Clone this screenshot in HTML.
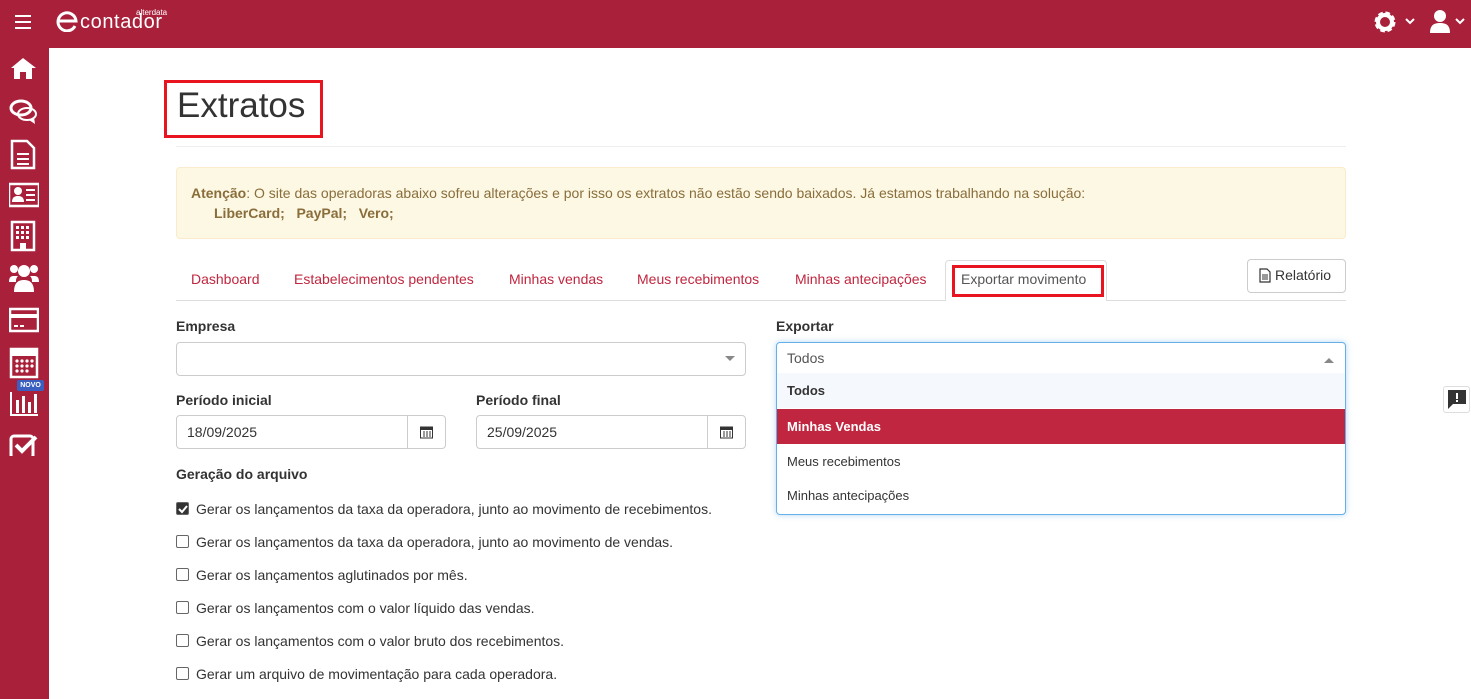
<!DOCTYPE html>
<html><head><meta charset="utf-8"><style>
*{box-sizing:border-box;margin:0;padding:0}
body{width:1471px;height:699px;overflow:hidden;background:#fff;font-family:"Liberation Sans",sans-serif;font-size:14px;color:#333;position:relative}
.abs{position:absolute}
.hdr{left:0;top:0;width:1471px;height:48px;background:#a8203a}
.side{left:0;top:48px;width:49px;height:651px;background:#a8203a}
.red{color:#c0263f}
.lbl{font-weight:bold;font-size:14px;color:#333}
.inp{border:1px solid #ccc;border-radius:4px;background:#fff}
.cb{width:13px;height:13px;border:1px solid #666;border-radius:2px;background:#fff}
.opt{left:0;width:568px;height:35px;line-height:35px;padding-left:10px;font-size:13px}
</style></head><body>
<div class="abs hdr"></div>
<div class="abs side"></div>
<!-- hamburger -->
<div class="abs" style="left:15px;top:15px;width:16px;height:2px;background:#fff"></div>
<div class="abs" style="left:15px;top:21px;width:16px;height:2px;background:#fff"></div>
<div class="abs" style="left:15px;top:27px;width:16px;height:2px;background:#fff"></div>
<!-- logo -->
<svg class="abs" style="left:56px;top:10px" width="22" height="22" viewBox="0 0 22 22"><path d="M19 16A9 9 0 1 1 20 11H3" fill="none" stroke="#fff" stroke-width="3"/></svg>
<div class="abs" style="left:80px;top:11px;color:#fff;font-size:20px;letter-spacing:0.6px">contador</div>
<div class="abs" style="left:136px;top:8px;color:#fff;font-size:8px">alterdata</div>
<!-- top right -->
<svg class="abs" style="left:1372px;top:9px" width="26" height="26" viewBox="0 0 26 26"><circle cx="13" cy="13" r="8" fill="none" stroke="#fff" stroke-width="5" stroke-dasharray="4 2.3"/><circle cx="13" cy="13" r="7" fill="none" stroke="#fff" stroke-width="4"/></svg>
<svg class="abs" style="left:1405px;top:17px" width="10" height="8"><path d="M1 2l4 4 4-4" stroke="#fff" stroke-width="2" fill="none"/></svg>
<svg class="abs" style="left:1429px;top:9px" width="22" height="25"><circle cx="11" cy="7" r="6" fill="#fff"/><path d="M1 24c0-8 4-10 10-10s10 2 10 10z" fill="#fff"/></svg>
<svg class="abs" style="left:1455px;top:17px" width="10" height="8"><path d="M1 2l4 4 4-4" stroke="#fff" stroke-width="2" fill="none"/></svg>
<!-- side icons -->
<svg class="abs" style="left:9px;top:56px" width="30" height="400" fill="#fff">
<path d="M2 12L14 2l13 10h-4v11h-6v-7h-6v7H5V12z"/>
<g transform="translate(0,42)"><ellipse cx="12" cy="10" rx="10" ry="7" fill="none" stroke="#fff" stroke-width="3"/><ellipse cx="18" cy="16" rx="9" ry="6" fill="none" stroke="#fff" stroke-width="2"/><path d="M20 22l6 4-1-7z"/></g>
<g transform="translate(0,84)"><path d="M3 1h15l7 7v20H3z" fill="none" stroke="#fff" stroke-width="2.5"/><rect x="8" y="13" width="12" height="2"/><rect x="8" y="18" width="12" height="2"/><rect x="8" y="23" width="12" height="2"/></g>
<g transform="translate(0,128)"><rect x="0" y="0" width="30" height="22" fill="none" stroke="#fff" stroke-width="2.5"/><circle cx="9" cy="7" r="4"/><path d="M3 18c0-5 3-6 6-6s6 1 6 6z"/><rect x="17" y="5" width="9" height="2"/><rect x="17" y="10" width="9" height="2"/><rect x="17" y="15" width="9" height="2"/></g>
<g transform="translate(0,166)"><rect x="3" y="0" width="22" height="28" fill="none" stroke="#fff" stroke-width="2.5"/><g fill="#fff"><rect x="7" y="4" width="3" height="3"/><rect x="12" y="4" width="3" height="3"/><rect x="17" y="4" width="3" height="3"/><rect x="7" y="9" width="3" height="3"/><rect x="12" y="9" width="3" height="3"/><rect x="17" y="9" width="3" height="3"/><rect x="7" y="14" width="3" height="3"/><rect x="12" y="14" width="3" height="3"/><rect x="17" y="14" width="3" height="3"/><rect x="11" y="21" width="6" height="7"/></g></g>
<g transform="translate(0,208)"><circle cx="5" cy="5" r="4"/><circle cx="25" cy="5" r="4"/><circle cx="15" cy="7" r="6"/><path d="M0 18c0-5 2-6 5-6h4c-2 2-2 4-2 6z"/><path d="M30 18c0-5-2-6-5-6h-4c2 2 2 4 2 6z"/><path d="M5 28c0-10 5-12 10-12s10 2 10 12z"/></g>
<g transform="translate(0,252)"><rect x="1" y="1" width="28" height="22" fill="none" stroke="#fff" stroke-width="2.5"/><rect x="1" y="6" width="28" height="4"/><rect x="5" y="17" width="4" height="2"/><rect x="11" y="17" width="4" height="2"/></g>
<g transform="translate(0,292)"><rect x="2" y="1" width="26" height="28" fill="none" stroke="#fff" stroke-width="2.5"/><rect x="2" y="1" width="26" height="7"/><g fill="#fff"><circle cx="8" cy="13" r="1.6"/><circle cx="13" cy="13" r="1.6"/><circle cx="18" cy="13" r="1.6"/><circle cx="23" cy="13" r="1.6"/><circle cx="8" cy="18" r="1.6"/><circle cx="13" cy="18" r="1.6"/><circle cx="18" cy="18" r="1.6"/><circle cx="23" cy="18" r="1.6"/><circle cx="8" cy="23" r="1.6"/><circle cx="13" cy="23" r="1.6"/><circle cx="18" cy="23" r="1.6"/></g></g>
<g transform="translate(-2,336)"><rect x="9" y="8" width="3" height="13"/><rect x="15" y="4" width="3" height="17"/><rect x="21" y="10" width="3" height="11"/><rect x="27" y="2" width="3" height="19"/><rect x="3" y="0" width="2" height="24"/><rect x="3" y="22" width="28" height="2"/></g>
<g transform="translate(0,376)"><rect x="2" y="4" width="22" height="22" rx="3" fill="none" stroke="#fff" stroke-width="3"/><path d="M7 13l6 6 14-14" stroke="#fff" stroke-width="4" fill="none"/></g>
</svg>
<div class="abs" style="left:17px;top:380px;width:27px;height:11px;background:#3b5fc0;border-radius:2px;color:#fff;font-size:7px;font-weight:bold;text-align:center;line-height:11px">NOVO</div>

<!-- title -->
<div class="abs" style="left:164px;top:80px;width:159px;height:58px;border:3px solid #e8141f"></div>
<div class="abs" style="left:177px;top:86px;font-size:35px;color:#333">Extratos</div>
<div class="abs" style="left:176px;top:146px;width:1170px;height:1px;background:#eee"></div>
<!-- alert -->
<div class="abs" style="left:176px;top:167px;width:1170px;height:72px;background:#fcf8e3;border:1px solid #faebcc;border-radius:4px;color:#8a6d3b;font-size:14px">
<div class="abs" style="left:14px;top:17px;white-space:nowrap"><b>Atenção</b>: O site das operadoras abaixo sofreu alterações e por isso os extratos não estão sendo baixados. Já estamos trabalhando na solução:</div>
<div class="abs" style="left:37px;top:37px;font-weight:bold;white-space:nowrap">LiberCard;&nbsp;&nbsp; PayPal;&nbsp;&nbsp; Vero;</div>
</div>
<!-- tabs -->
<div class="abs" style="left:176px;top:300px;width:1170px;height:1px;background:#ddd"></div>
<div class="abs red" style="left:191px;top:271px">Dashboard</div>
<div class="abs red" style="left:294px;top:271px">Estabelecimentos pendentes</div>
<div class="abs red" style="left:509px;top:271px">Minhas vendas</div>
<div class="abs red" style="left:637px;top:271px">Meus recebimentos</div>
<div class="abs red" style="left:795px;top:271px">Minhas antecipações</div>
<div class="abs" style="left:945px;top:260px;width:162px;height:41px;background:#fff;border:1px solid #ddd;border-bottom:none;border-radius:4px 4px 0 0"></div>
<div class="abs" style="left:952px;top:265px;width:152px;height:32px;border:3px solid #e8141f"></div>
<div class="abs" style="left:961px;top:271px;color:#555">Exportar movimento</div>
<div class="abs inp" style="left:1247px;top:259px;width:99px;height:34px"></div>
<svg class="abs" style="left:1259px;top:268px" width="12" height="15"><path d="M1 1h7l3 3v10H1z" fill="none" stroke="#333" stroke-width="1.2"/><path d="M3 7h6M3 9h6M3 11h6" stroke="#333"/></svg>
<div class="abs" style="left:1275px;top:267px;color:#333">Relatório</div>
<!-- form left -->
<div class="abs lbl" style="left:176px;top:318px">Empresa</div>
<div class="abs inp" style="left:176px;top:342px;width:570px;height:34px"></div>
<div class="abs" style="left:725px;top:356px;border:5px solid transparent;border-top:5px solid #888"></div>
<div class="abs lbl" style="left:176px;top:392px">Período inicial</div>
<div class="abs inp" style="left:176px;top:415px;width:270px;height:34px"></div>
<div class="abs" style="left:407px;top:416px;width:1px;height:32px;background:#ccc"></div>
<div class="abs" style="left:187px;top:424px">18/09/2025</div>
<div class="abs lbl" style="left:476px;top:392px">Período final</div>
<div class="abs inp" style="left:476px;top:415px;width:270px;height:34px"></div>
<div class="abs" style="left:707px;top:416px;width:1px;height:32px;background:#ccc"></div>
<div class="abs" style="left:487px;top:424px">25/09/2025</div>
<svg class="abs" style="left:420px;top:425px" width="13" height="14"><rect x="0.5" y="2" width="12" height="11" fill="none" stroke="#333"/><rect x="0.5" y="2" width="12" height="3" fill="#333"/><path d="M3 7h2M6 7h2M9 7h2M3 9h2M6 9h2M9 9h2M3 11h2M6 11h2M9 11h2" stroke="#333"/></svg>
<svg class="abs" style="left:720px;top:425px" width="13" height="14"><rect x="0.5" y="2" width="12" height="11" fill="none" stroke="#333"/><rect x="0.5" y="2" width="12" height="3" fill="#333"/><path d="M3 7h2M6 7h2M9 7h2M3 9h2M6 9h2M9 9h2M3 11h2M6 11h2M9 11h2" stroke="#333"/></svg>
<div class="abs lbl" style="left:176px;top:466px">Geração do arquivo</div>
<div class="abs" style="left:176px;top:501px;width:600px;color:#333">
<div style="position:absolute;top:0"><span class="cb abs" style="left:0;top:1px;background:#333"></span><svg class="abs" style="left:1px;top:2px" width="12" height="12"><path d="M2 6l3 3 5-6" stroke="#fff" stroke-width="2" fill="none"/></svg><span class="abs" style="left:20px;white-space:nowrap">Gerar os lançamentos da taxa da operadora, junto ao movimento de recebimentos.</span></div>
<div style="position:absolute;top:33px"><span class="cb abs" style="left:0;top:1px"></span><span class="abs" style="left:20px;white-space:nowrap">Gerar os lançamentos da taxa da operadora, junto ao movimento de vendas.</span></div>
<div style="position:absolute;top:66px"><span class="cb abs" style="left:0;top:1px"></span><span class="abs" style="left:20px;white-space:nowrap">Gerar os lançamentos aglutinados por mês.</span></div>
<div style="position:absolute;top:99px"><span class="cb abs" style="left:0;top:1px"></span><span class="abs" style="left:20px;white-space:nowrap">Gerar os lançamentos com o valor líquido das vendas.</span></div>
<div style="position:absolute;top:132px"><span class="cb abs" style="left:0;top:1px"></span><span class="abs" style="left:20px;white-space:nowrap">Gerar os lançamentos com o valor bruto dos recebimentos.</span></div>
<div style="position:absolute;top:165px"><span class="cb abs" style="left:0;top:1px"></span><span class="abs" style="left:20px;white-space:nowrap">Gerar um arquivo de movimentação para cada operadora.</span></div>
</div>
<!-- exportar -->
<div class="abs lbl" style="left:776px;top:318px">Exportar</div>
<div class="abs" style="left:776px;top:342px;width:570px;height:173px;border:1px solid #66afe9;border-radius:4px;background:#fff;box-shadow:0 0 6px rgba(102,175,233,.5);overflow:hidden">
<div class="abs" style="left:10px;top:7px;color:#555">Todos</div>
<div class="abs" style="left:547px;top:10px;border:5px solid transparent;border-bottom:5px solid #888"></div>
<div class="abs opt" style="top:30px;background:#f5f9fd;font-weight:bold;color:#333">Todos</div>
<div class="abs opt" style="top:66px;background:#c0263f;color:#fff;font-weight:bold">Minhas Vendas</div>
<div class="abs opt" style="top:101px;color:#333">Meus recebimentos</div>
<div class="abs opt" style="top:135px;color:#333">Minhas antecipações</div>
</div>
<!-- feedback -->
<div class="abs" style="left:1443px;top:386px;width:27px;height:27px;border:1px solid #ddd;border-radius:3px;background:#fff"></div>
<svg class="abs" style="left:1447px;top:389px" width="20" height="21"><path d="M1 1h18v14H6l-5 5z" fill="#333"/><rect x="9" y="4" width="2" height="6" fill="#fff"/><rect x="9" y="11" width="2" height="2" fill="#fff"/></svg>
</body></html>
